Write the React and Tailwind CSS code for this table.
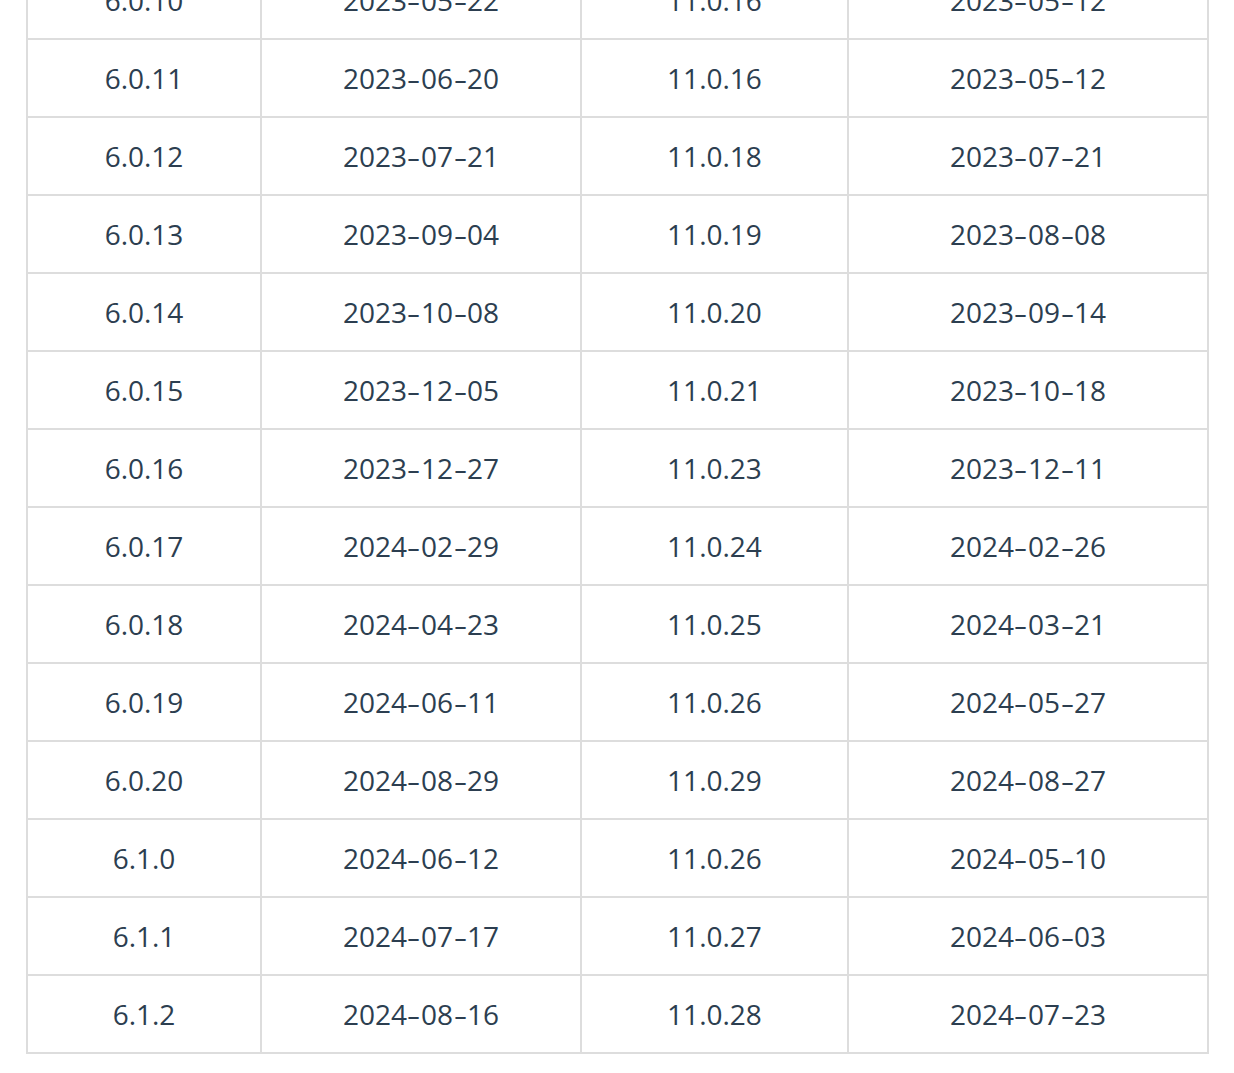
import React from "react";

const rows = [
  ["6.0.10", "2023-05-22", "11.0.16", "2023-05-12"],
  ["6.0.11", "2023-06-20", "11.0.16", "2023-05-12"],
  ["6.0.12", "2023-07-21", "11.0.18", "2023-07-21"],
  ["6.0.13", "2023-09-04", "11.0.19", "2023-08-08"],
  ["6.0.14", "2023-10-08", "11.0.20", "2023-09-14"],
  ["6.0.15", "2023-12-05", "11.0.21", "2023-10-18"],
  ["6.0.16", "2023-12-27", "11.0.23", "2023-12-11"],
  ["6.0.17", "2024-02-29", "11.0.24", "2024-02-26"],
  ["6.0.18", "2024-04-23", "11.0.25", "2024-03-21"],
  ["6.0.19", "2024-06-11", "11.0.26", "2024-05-27"],
  ["6.0.20", "2024-08-29", "11.0.29", "2024-08-27"],
  ["6.1.0", "2024-06-12", "11.0.26", "2024-05-10"],
  ["6.1.1", "2024-07-17", "11.0.27", "2024-06-03"],
  ["6.1.2", "2024-08-16", "11.0.28", "2024-07-23"],
];

function Cell({ text }) {
  const parts = text.split("-");
  return (
    <span className="whitespace-nowrap">
      {parts.map((p, k) => (
        <React.Fragment key={k}>
          {k > 0 && (
            <span className="inline-block px-[2.5px]">
              <span className="inline-block scale-x-[1.5]">-</span>
            </span>
          )}
          {p}
        </React.Fragment>
      ))}
    </span>
  );
}

export default function App() {
  return (
    <div className="w-[1234px] h-[1073px] overflow-hidden bg-white">
      <div
        className="ml-[26px] mt-[-38px] w-[1183px] border-l-2 border-[#dddddd] text-[#2c3e50] text-[28px]"
        style={{ fontFamily: '"Open Sans", "Noto Sans", sans-serif' }}
      >
        {rows.map((r, i) => (
          <div key={i} className="grid grid-cols-[234px_320px_267px_360px]">
            {r.map((c, j) => (
              <div
                key={j}
                className="h-[78px] flex items-center justify-center border-r-2 border-b-2 border-[#dddddd]"
              >
                <Cell text={c} />
              </div>
            ))}
          </div>
        ))}
      </div>
    </div>
  );
}
